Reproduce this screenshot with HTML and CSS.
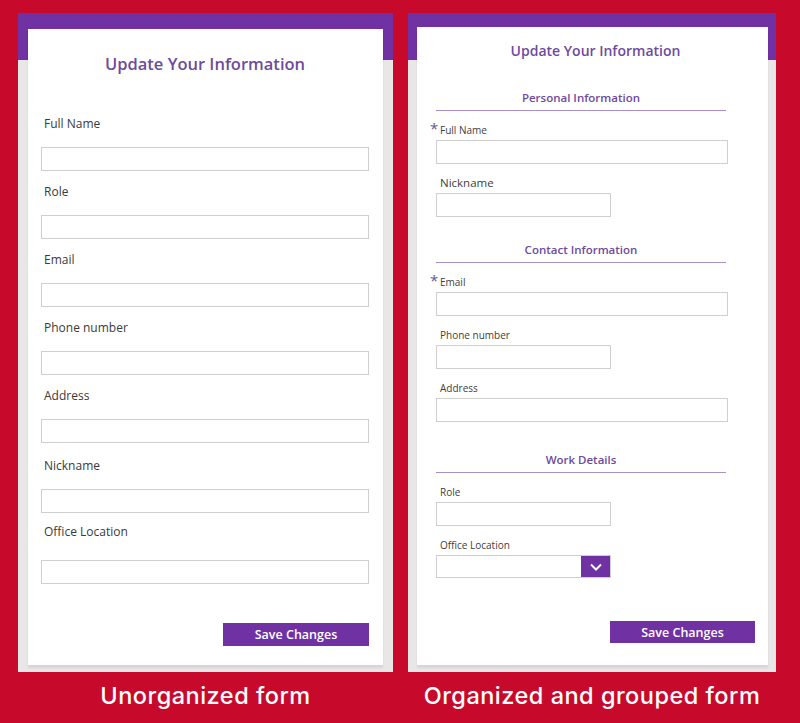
FILE: index.html
```html
<!DOCTYPE html>
<html lang="en">
<head>
  <meta charset="UTF-8">
  <title>Form comparison</title>
  <link rel="stylesheet" href="styles.css">
</head>
<body>

  <div class="board">
    <!-- before: one long list of fields -->
    <div class="column column-left">
      <div class="panel panel-left">
        <div class="card card-plain">
          <h2 class="card-title">Update Your Information</h2>
          <div class="plain-field"><label>Full Name</label><input type="text"></div>
          <div class="plain-field"><label>Role</label><input type="text"></div>
          <div class="plain-field"><label>Email</label><input type="text"></div>
          <div class="plain-field"><label>Phone number</label><input type="text"></div>
          <div class="plain-field"><label>Address</label><input type="text"></div>
          <div class="plain-field plain-field-low"><label>Nickname</label><input type="text"></div>
          <div class="plain-field plain-field-loose"><label>Office Location</label><input type="text"></div>
          <div class="btn-row btn-row-plain">
            <button>Save Changes</button>
          </div>
        </div>
      </div>
      <p class="caption">Unorganized form</p>
    </div>

    <!-- after: grouped into sections -->
    <div class="column column-right">
      <div class="panel panel-right">
        <div class="card card-grouped">
          <h2 class="card-title card-title-sm">Update Your Information</h2>

          <div class="section section-first">
            <h3 class="section-title">Personal Information</h3>
            <div class="field">
              <label><span class="req">*</span>Full Name</label>
              <input type="text" class="wide">
            </div>
            <div class="field">
              <label class="label-lg">Nickname</label>
              <input type="text" class="short">
            </div>
          </div>

          <div class="section">
            <h3 class="section-title">Contact Information</h3>
            <div class="field">
              <label><span class="req">*</span>Email</label>
              <input type="text" class="wide">
            </div>
            <div class="field">
              <label>Phone number</label>
              <input type="text" class="short">
            </div>
            <div class="field">
              <label>Address</label>
              <input type="text" class="wide">
            </div>
          </div>

          <div class="section section-last">
            <h3 class="section-title">Work Details</h3>
            <div class="field">
              <label>Role</label>
              <input type="text" class="short">
            </div>
            <div class="field">
              <label>Office Location</label>
              <div class="select">
                <span class="select-value"></span>
                <span class="select-arrow">
                  <svg width="14" height="10" viewBox="0 0 14 10"><path d="M2 2.5 L7 7.5 L12 2.5" fill="none" stroke="#fff" stroke-width="2"/></svg>
                </span>
              </div>
            </div>
          </div>

          <div class="btn-row btn-row-grouped">
            <button>Save Changes</button>
          </div>
        </div>
      </div>
      <p class="caption">Organized and grouped form</p>
    </div>
  </div>

</body>
</html>
```

FILE: styles.css
```css
body {
  margin: 0;
  background-color: #c70a2c;
  font-family: 'Open Sans', 'Noto Sans', sans-serif;
  color: #3a3a3a;
}
.board {
  display: flex;
  gap: 15px;
  padding: 13px 0 0 18px;
  height: 710px;
}
.column-left {
  width: 375px;
}
.column-right {
  width: 368px;
}
.panel {
  height: 659px;
  box-sizing: border-box;
  background: linear-gradient(#7031a3 0, #7031a3 47px, #e9e6e8 47px);
}
.panel-left {
  padding: 16px 10px 7px 10px;
}
.panel-right {
  padding: 14px 8px 7px 9px;
}
.card {
  background: white;
  height: 100%;
  box-sizing: border-box;
  box-shadow: 0 3px 2px rgba(0,0,0,0.08);
}
.card-title {
  margin: 0;
  text-align: center;
  color: #6e4a9e;
  font-weight: 600;
  font-size: 16.5px;
  line-height: 22px;
}
.card-title-sm {
  font-size: 14px;
  line-height: 20px;
}
input {
  display: block;
  box-sizing: border-box;
  height: 24px;
  border: 1px solid #cfcfcf;
  background: white;
  margin: 0;
  padding: 0 6px;
}
button {
  background-color: #7031a3;
  color: white;
  border: none;
  font-family: 'Open Sans', sans-serif;
  font-weight: 600;
  cursor: pointer;
}

/* left form */
.card-plain {
  padding: 24px 14px 0 13px;
}
.card-plain .card-title {
  margin-bottom: 41px;
}
.plain-field {
  margin-bottom: 13px;
}
.plain-field label {
  display: block;
  padding-left: 3px;
  font-size: 12px;
  line-height: 16px;
  margin-bottom: 15px;
}
.plain-field input {
  width: 100%;
}
.plain-field-low {
  margin-top: 15px;
  margin-bottom: 11px;
}
.plain-field-loose label {
  margin-bottom: 20px;
}
.btn-row {
  display: flex;
  justify-content: flex-end;
}
.btn-row-plain {
  margin-top: 39px;
}
.btn-row-plain button {
  width: 146px;
  height: 23px;
  font-size: 12.5px;
}

/* right form */
.card-grouped {
  padding: 14px 13px 0 19px;
}
.section {
  width: 292px;
  margin-top: 25px;
}
.section-first {
  margin-top: 29px;
}
.section-last {
  margin-top: 30px;
}
.section-title {
  margin: 0;
  width: 290px;
  text-align: center;
  color: #6e4a9e;
  font-size: 11.5px;
  font-weight: 600;
  line-height: 16px;
  padding-bottom: 4px;
  border-bottom: 1px solid #a98fc9;
}
.field {
  margin-top: 12px;
}
.field label {
  display: block;
  height: 14px;
  padding-left: 4px;
  font-size: 10px;
  line-height: 14px;
  margin-bottom: 3px;
  color: #404040;
}
.field .label-lg {
  font-size: 11.5px;
}
.req {
  display: inline-block;
  width: 10px;
  margin-left: -10px;
  color: #6b5a8a;
  font-size: 15px;
  line-height: 10px;
  vertical-align: top;
}
.wide {
  width: 292px;
}
.short {
  width: 175px;
}
.select {
  display: flex;
  width: 175px;
  height: 23px;
  box-sizing: border-box;
  border: 1px solid #cfcfcf;
}
.select-value {
  flex: 1;
}
.select-arrow {
  width: 29px;
  background-color: #7031a3;
  display: flex;
  align-items: center;
  justify-content: center;
}
.btn-row-grouped {
  margin-top: 43px;
}
.btn-row-grouped button {
  width: 145px;
  height: 22px;
  font-size: 12.5px;
}

.caption {
  margin: 8px 0 0 0;
  text-align: center;
  color: white;
  font-family: 'Inter', 'Lato', sans-serif;
  font-weight: 500;
  font-size: 23.5px;
  line-height: 32px;
  letter-spacing: 0.5px;
}
```
